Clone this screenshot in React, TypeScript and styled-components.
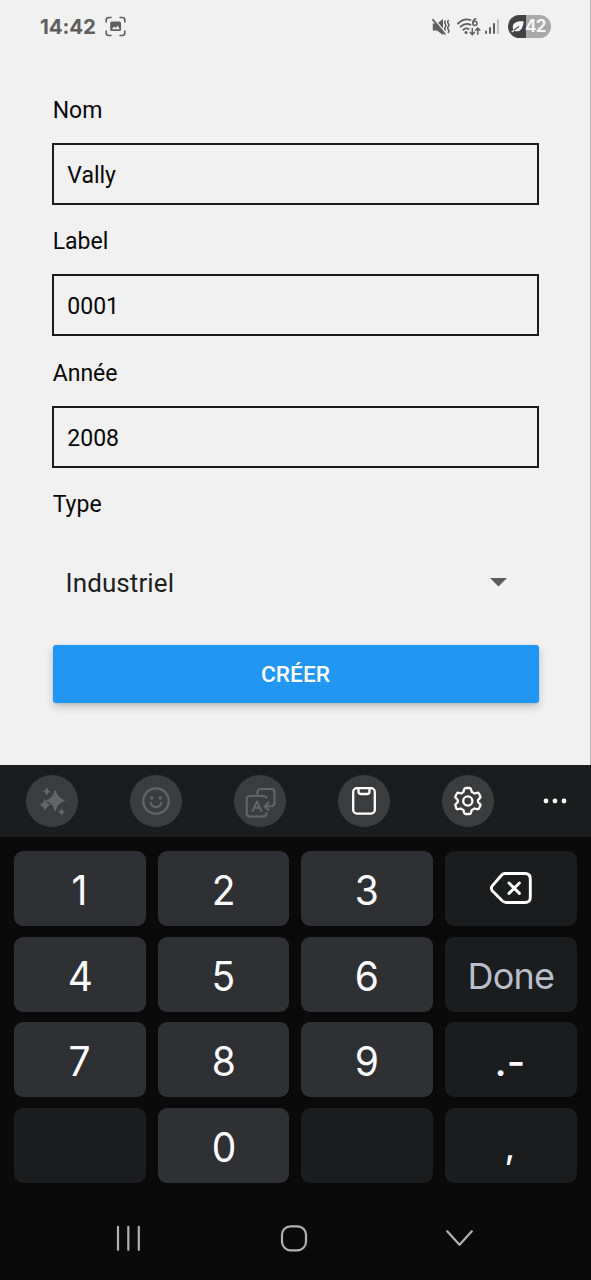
import React from "react";
import styled, { createGlobalStyle } from "styled-components";

const GlobalStyle = createGlobalStyle`
  *, *::before, *::after { box-sizing: border-box; }
  body { margin: 0; background: #f1f1f1; }
  svg { display: block; }
`;

const Screen = styled.div`
  display: flex;
  flex-direction: column;
  width: 591px;
  height: 1280px;
  overflow: hidden;
  background: #0a0a0a;
  font-family: Roboto, sans-serif;
`;

const AppArea = styled.div`
  height: 765px;
  background: #f1f1f1;
  border-right: 1px solid #b4b4b4;
`;

const StatusBar = styled.header`
  display: flex;
  align-items: center;
  height: 52px;
  padding: 1px 39px 0 40px;
  color: #5f5f5f;
`;

const Clock = styled.span`
  width: 65px;
  font: 700 20.5px/24px Inter, sans-serif;
  letter-spacing: -0.1px;
`;

const StatusIcons = styled.div`
  display: flex;
  align-items: center;
  margin-left: auto;
`;

const WifiSlot = styled.div`
  margin: 0 2px 0 7px;
`;

const Battery = styled.div`
  display: flex;
  align-items: center;
  gap: 1px;
  width: 43px;
  height: 23px;
  margin-left: 8px;
  padding-left: 3px;
  border-radius: 12px;
  background: linear-gradient(90deg, #434343 18px, #a9a9a9 18px);
  color: #f5f5f5;
  font: 700 17px/23px Inter, sans-serif;
  letter-spacing: -0.8px;
`;

const Form = styled.form`
  display: flex;
  flex-direction: column;
  padding: 44px 51px 0 52px;
`;

const Field = styled.label`
  display: flex;
  flex-direction: column;
  height: 131.3px;
`;

const FieldLabel = styled.span`
  height: 28px;
  padding: 1px 0 0 0.7px;
  font-size: 23px;
  line-height: 28px;
  color: #080808;
`;

const Input = styled.input`
  width: 487px;
  height: 62px;
  margin-top: 19px;
  padding: 3px 13.3px 0;
  border: 2px solid #1b1b1b;
  border-radius: 0;
  outline: none;
  background: transparent;
  color: #080808;
  font: 400 23px Roboto, sans-serif;
`;

const Select = styled.div`
  display: flex;
  align-items: center;
  justify-content: space-between;
  height: 72px;
  margin-top: 29px;
  padding: 0 32px 0 13.5px;
  font-size: 26px;
  letter-spacing: 0.1px;
  color: #1e1e1e;
`;

const Submit = styled.button`
  width: 486px;
  height: 58px;
  margin: 26px 0 0 0.5px;
  padding: 2px 0 0;
  border: 0;
  border-radius: 3px;
  background: #2196f3;
  box-shadow: 0 4px 8px rgba(0, 0, 0, 0.2), 0 1px 3px rgba(0, 0, 0, 0.08);
  color: #fff;
  font: 500 22.7px Roboto, sans-serif;
`;

const Toolbar = styled.div`
  display: flex;
  align-items: center;
  gap: 52px;
  height: 72px;
  padding-left: 26px;
  background: #1b1c1e;
`;

const ToolButton = styled.div<{ $dim?: boolean }>`
  display: flex;
  align-items: center;
  justify-content: center;
  width: 52px;
  height: 52px;
  border-radius: 50%;
  background: #3b3c3e;
  color: ${(p) => (p.$dim ? "#646567" : "#fff")};
`;

const More = styled.div`
  margin-left: -3px;
  color: #fff;
`;

const Keypad = styled.div`
  display: grid;
  grid-template-columns: repeat(4, 131.5px);
  grid-auto-rows: 75px;
  gap: 10.6px 12.2px;
  padding: 14px 0 0 14px;
`;

const Key = styled.div<{ $fn?: boolean }>`
  display: flex;
  align-items: center;
  justify-content: center;
  border-radius: 9px;
  background: ${(p) => (p.$fn ? "#1b1c1e" : "#2f3034")};
`;

const Digit = styled.span`
  padding-top: 4px;
  color: #fbfbff;
  font: 400 41px/1 Inter, sans-serif;
  transform: scaleX(0.95);
`;

const Action = styled.span`
  padding-top: 3px;
  color: #b9bfca;
  font: 400 36px/1 Inter, sans-serif;
  letter-spacing: -0.8px;
`;

const Punctuation = styled.span<{ $size: number }>`
  padding: 4px 2px 0 0;
  color: #fbfbff;
  font: 500 ${(p) => p.$size}px/1 Inter, sans-serif;
`;

const BackspaceSlot = styled.div`
  padding-bottom: 1px;
`;

const NavBar = styled.nav`
  display: flex;
  align-items: center;
  justify-content: space-between;
  height: 30px;
  margin-top: 40px;
  padding: 0 117px 0 115px;
  color: #b2b2b2;
`;

const CaptureIcon = () => (
  <svg width="21" height="21" viewBox="0 0 21 21" fill="none" stroke="currentColor" strokeWidth="1.6" strokeLinecap="round">
    <path d="M1.2 6V4Q1.2 1.5 4 1.5H6M15 1.5H17Q19.8 1.5 19.8 4V6M19.8 15V17Q19.8 19.5 17 19.5H15M6 19.5H4Q1.2 19.5 1.2 17V15" />
    <rect x="5.2" y="5.5" width="10.8" height="9.6" rx="1.6" fill="currentColor" stroke="none" />
    <path d="M6.8 13.2L9.2 10.6L10.8 12L12.8 9.6L14.6 13.2Z" fill="#f1f1f1" stroke="none" />
  </svg>
);

const MuteIcon = () => (
  <svg width="18" height="18" viewBox="0 0 18 18" fill="none" stroke="currentColor" strokeWidth="1.5" strokeLinecap="round">
    <path d="M.8 5.5H5L11 1V17L5 12.5H.8Z" fill="currentColor" stroke="none" />
    <path d="M2.2 1L13 14" stroke="#f1f1f1" strokeWidth="1.3" />
    <path d="M1 1.8L12.8 16" strokeWidth="1.8" />
    <path d="M13.3 3q-1.2 1.5 0 3t0 3 0 3M16.3 2.5q-1.2 1.5 0 3t0 3 0 3 0 3" strokeWidth="1.5" />
  </svg>
);

const WifiIcon = () => (
  <svg width="25" height="20" viewBox="0 0 25 20" fill="none" stroke="currentColor" strokeWidth="1.8" strokeLinecap="round">
    <path d="M1 6.5Q7 .7 13.5 3M3.5 9.7Q8.5 5.2 13.5 7.8M6.3 12.7Q9 10.4 11.6 12" />
    <circle cx="9" cy="15.4" r="1.5" fill="currentColor" stroke="none" />
    <path d="M18.8 1.8Q16 2.5 15.8 6" strokeWidth="1.5" />
    <circle cx="17.9" cy="6.3" r="2.1" strokeWidth="1.5" />
    <path d="M15.3 11.5v6M13.2 15.4l2.1 2.2 2.1-2.2M20.8 17.3v-6M18.7 13.2l2.1-2.2 2.1 2.2" strokeWidth="1.5" />
  </svg>
);

const SignalIcon = () => (
  <svg width="16" height="17" viewBox="0 0 16 17" fill="currentColor">
    <rect x="1" y="12.5" width="2" height="3.5" rx="1" />
    <rect x="5" y="9" width="2" height="7" rx="1" />
    <rect x="9" y="5" width="2" height="11" rx="1" />
    <rect x="13" y="1" width="2" height="15" rx="1" opacity=".35" />
  </svg>
);

const LeafIcon = () => (
  <svg width="13" height="13" viewBox="0 0 13 13">
    <path d="M12.7 1.4C6.6 1 1.5 2.6 1.8 7.4Q1.9 9.6 3.4 10.8C9 13 12 8.4 12.7 1.4Z" fill="#f5f5f5" />
    <path d="M2.6 10.6Q4.8 8.4 8 6.6" stroke="#434343" strokeWidth="1.1" fill="none" />
    <path d="M.7 12L3.2 10.2" stroke="#f5f5f5" strokeWidth="1.3" />
  </svg>
);

const SparkleIcon = () => (
  <svg width="28" height="30" viewBox="0 0 28 30" fill="currentColor">
    <path d="M17.2 5Q18.8 12.2 26 14.6Q18.8 17 17.2 24.2Q15.6 17 9 14.6Q15.6 12.2 17.2 5Z" stroke="currentColor" strokeWidth="1.5" strokeLinejoin="round" />
    <path d="M7 12Q8.4 17.4 13 18.8Q8.4 20.2 7 25.8Q5.6 20.2 1.2 18.8Q5.6 17.4 7 12Z" stroke="#3b3c3e" strokeWidth=".4" />
    <path d="M8.8 1.3Q9.6 4.6 12.5 5.5Q9.6 6.4 8.8 9.7Q8 6.4 5.1 5.5Q8 4.6 8.8 1.3ZM23.6 22.3Q24.4 25.1 27 26Q24.4 26.9 23.6 29.7Q22.8 26.9 20.2 26Q22.8 25.1 23.6 22.3Z" />
  </svg>
);

const SmileIcon = () => (
  <svg width="28" height="28" viewBox="0 0 28 28" fill="none" stroke="currentColor" strokeWidth="2.2" strokeLinecap="round">
    <circle cx="14" cy="14" r="12.7" />
    <path d="M8.7 16Q10 20 14 20T19.3 16" />
    <circle cx="9.8" cy="11" r="1.7" fill="currentColor" stroke="none" />
    <circle cx="18.2" cy="11" r="1.7" fill="currentColor" stroke="none" />
  </svg>
);

const TranslateIcon = () => (
  <svg width="32" height="34" viewBox="0 -4 32 34" fill="none" stroke="currentColor" strokeWidth="2.1" strokeLinecap="round" strokeLinejoin="round">
    <path d="M13.5 6V4.5Q13.5 1 17 1H27Q30.5 1 30.5 4.5V15Q30.5 18.2 27 18.2H21M24.5 14.4L20.7 18.2L24.5 22" />
    <path d="M22.5 9.5Q21.8 8 19.5 8H6.2Q2.7 8 2.7 11.5V25Q2.7 28.5 6.2 28.5H19Q22.5 28.5 22.5 25" />
    <path d="M8.7 22.8L13 13.3L17.3 22.8M10.2 19.8H15.8" strokeWidth="1.9" />
  </svg>
);

const ClipboardIcon = () => (
  <svg width="26" height="30" viewBox="0 0 26 30" fill="none" stroke="currentColor" strokeWidth="2.3" strokeLinejoin="round">
    <rect x="2.2" y="2.2" width="21.6" height="25.4" rx="3.8" />
    <path d="M7.5 2.2V5.5Q7.5 8 10 8H16Q18.5 8 18.5 5.5V2.2" />
  </svg>
);

const GearIcon = () => (
  <svg width="28" height="30" viewBox="0 0 28 30" fill="none" stroke="currentColor" strokeWidth="2.3" strokeLinejoin="round">
    <path d="M11.8 2H15.4Q16.6 2 17 3.2L17.8 6Q19.3 6.5 20.3 7.5L23.1 6.8Q24.3 6.5 24.9 7.5L26.2 10Q26.8 11 26 11.9L24 14V16L26 18.1Q26.8 19 26.2 20L24.9 22.5Q24.3 23.5 23.1 23.2L20.3 22.5Q19.3 23.5 17.8 24L17 26.8Q16.6 28 15.4 28H11.8Q10.6 28 10.2 26.8L9.4 24Q7.9 23.5 6.9 22.5L4.1 23.2Q2.9 23.5 2.3 22.5L1.6 20Q1 19 1.8 18.1L3.8 16V14L1.8 11.9Q1 11 1.6 10L2.9 7.5Q3.5 6.5 4.7 6.8L7.5 7.5Q8.5 6.5 9.4 6L10.2 3.2Q10.6 2 11.8 2Z" />
    <circle cx="13.8" cy="15" r="4.6" />
  </svg>
);

const BackspaceIcon = () => (
  <svg width="44" height="34" viewBox="0 0 44 34" fill="none" stroke="#fff" strokeWidth="2.9" strokeLinecap="round" strokeLinejoin="round">
    <path d="M16 2.5H36Q41.3 2.5 41.3 7.8V26.2Q41.3 31.5 36 31.5H17.5Q15 31.5 13.2 29.8L3.5 20Q1.2 17.3 3.5 14.6L12.5 4.3Q14 2.5 16 2.5Z" />
    <path d="M20 12L30.4 22.4M30.4 12L20 22.4" strokeWidth="2.9" />
  </svg>
);

const fields = [
  { label: "Nom", value: "Vally" },
  { label: "Label", value: "0001" },
  { label: "Année", value: "2008" },
];

export default function App() {
  return (
    <Screen>
      <GlobalStyle />
      <AppArea>
        <StatusBar>
          <Clock>14:42</Clock>
          <CaptureIcon />
          <StatusIcons>
            <MuteIcon />
            <WifiSlot>
              <WifiIcon />
            </WifiSlot>
            <SignalIcon />
            <Battery>
              <LeafIcon />
              42
            </Battery>
          </StatusIcons>
        </StatusBar>
        <Form>
          {fields.map((f) => (
            <Field key={f.label}>
              <FieldLabel>{f.label}</FieldLabel>
              <Input defaultValue={f.value} />
            </Field>
          ))}
          <FieldLabel>Type</FieldLabel>
          <Select>
            Industriel
            <svg width="17" height="9" viewBox="0 0 17 9" fill="#5d5d5d">
              <path d="M0 0H17L8.5 8.5Z" />
            </svg>
          </Select>
          <Submit type="button">CRÉER</Submit>
        </Form>
      </AppArea>
      <Toolbar>
        <ToolButton $dim><SparkleIcon /></ToolButton>
        <ToolButton $dim><SmileIcon /></ToolButton>
        <ToolButton $dim><TranslateIcon /></ToolButton>
        <ToolButton><ClipboardIcon /></ToolButton>
        <ToolButton><GearIcon /></ToolButton>
        <More>
          <svg width="24" height="6" viewBox="0 0 24 6" fill="currentColor">
            <circle cx="3" cy="3" r="2.4" />
            <circle cx="12" cy="3" r="2.4" />
            <circle cx="21" cy="3" r="2.4" />
          </svg>
        </More>
      </Toolbar>
      <Keypad>
        <Key><Digit>1</Digit></Key>
        <Key><Digit>2</Digit></Key>
        <Key><Digit>3</Digit></Key>
        <Key $fn><BackspaceSlot><BackspaceIcon /></BackspaceSlot></Key>
        <Key><Digit>4</Digit></Key>
        <Key><Digit>5</Digit></Key>
        <Key><Digit>6</Digit></Key>
        <Key $fn><Action>Done</Action></Key>
        <Key><Digit>7</Digit></Key>
        <Key><Digit>8</Digit></Key>
        <Key><Digit>9</Digit></Key>
        <Key $fn><Punctuation $size={40}>.-</Punctuation></Key>
        <Key $fn />
        <Key><Digit>0</Digit></Key>
        <Key $fn />
        <Key $fn><Punctuation $size={34}>,</Punctuation></Key>
      </Keypad>
      <NavBar>
        <svg width="27" height="26" viewBox="0 0 27 26" stroke="currentColor" strokeWidth="2.2" strokeLinecap="round">
          <path d="M3 1.8V24.8M13.3 1.8V24.8M23.8 1.8V24.8" />
        </svg>
        <svg width="28" height="28" viewBox="0 0 28 28" fill="none" stroke="currentColor" strokeWidth="2.2">
          <rect x="2" y="2.3" width="24" height="24" rx="8.5" />
        </svg>
        <svg width="28" height="18" viewBox="0 0 28 18" fill="none" stroke="currentColor" strokeWidth="2.2" strokeLinecap="round" strokeLinejoin="round">
          <path d="M1.2 2.3L13.5 15.8L25.8 2.3" />
        </svg>
      </NavBar>
    </Screen>
  );
}
